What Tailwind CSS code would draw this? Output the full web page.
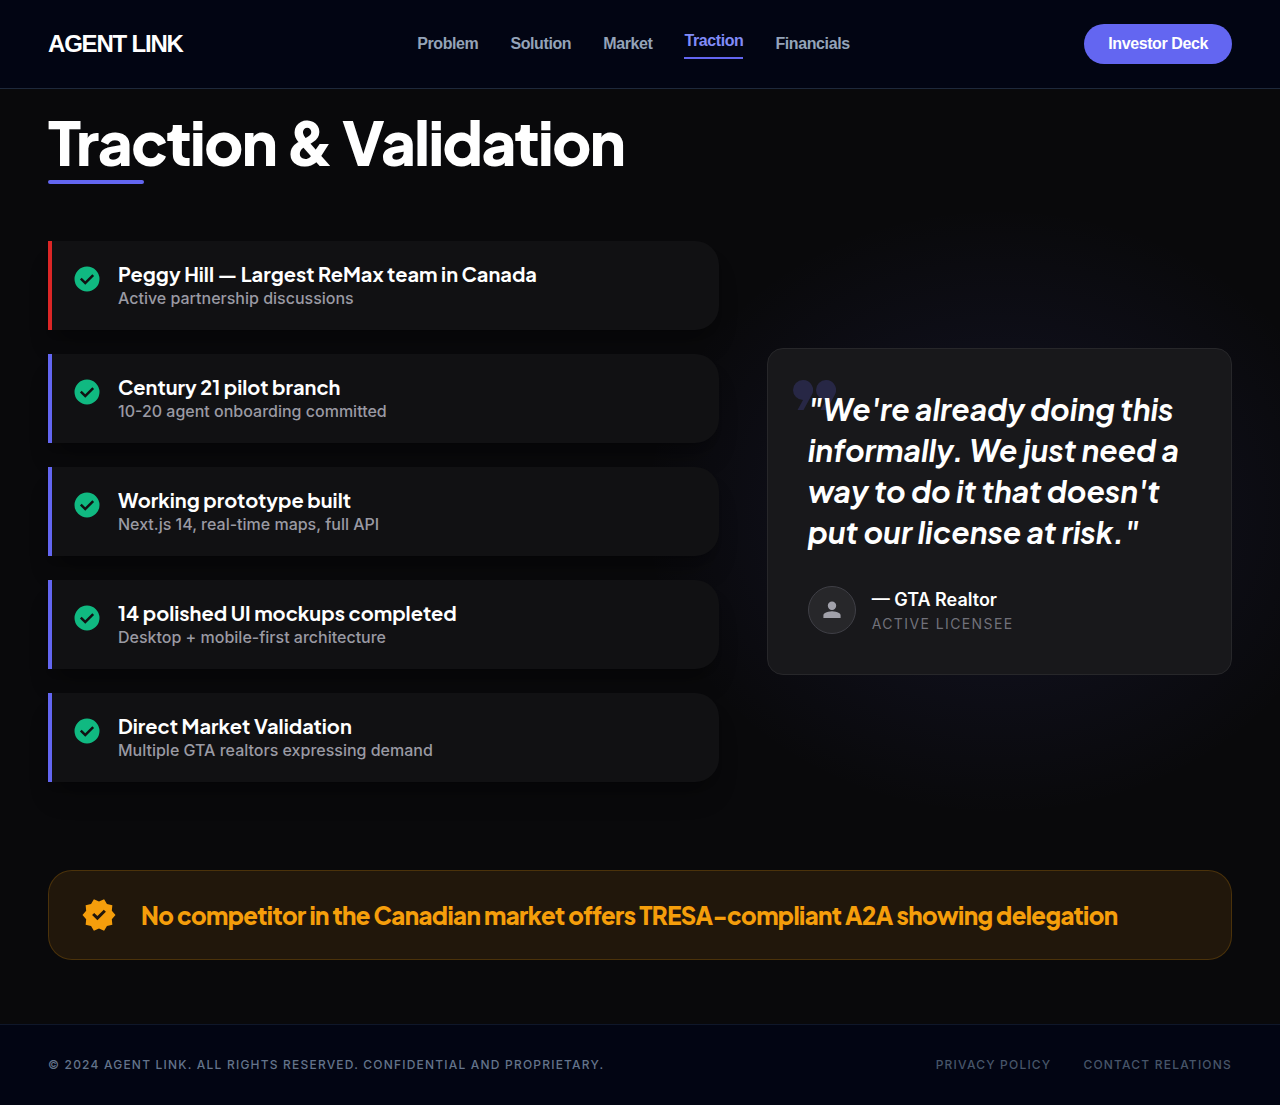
<!DOCTYPE html>
<html lang="en">
<head>
  <meta charset="UTF-8" />
  <meta name="viewport" content="width=device-width, initial-scale=1.0" />
  <title>Agent Link - Traction &amp; Validation</title>
  <script src="https://cdn.jsdelivr.net/npm/@tailwindcss/browser@4"></script>
</head>
<body class="min-h-screen flex flex-col bg-[#09090b] text-white font-['Inter',sans-serif] antialiased overflow-x-hidden">
  <!-- icon sprite -->
  <svg class="hidden">
    <symbol id="icon-check" viewBox="0 0 24 24">
      <path d="M12 2a10 10 0 1 0 0 20 10 10 0 0 0 0-20Zm-1.4 14.6-4.25-4.25 1.4-1.4 2.85 2.85 5.65-5.65 1.4 1.4-7.05 7.05Z" />
    </symbol>
  </svg>

  <header class="relative z-10 border-b border-[#1e293b] bg-[#020513] font-['Liberation_Sans',sans-serif] font-bold tracking-tight">
    <div class="flex items-center justify-between px-12 py-6">
      <a href="#" class="text-2xl leading-8 tracking-tighter">AGENT LINK</a>
      <nav class="flex items-center gap-8 text-base text-[#94a3b8]">
        <a href="#">Problem</a>
        <a href="#">Solution</a>
        <a href="#">Market</a>
        <a href="#" class="border-b-2 border-[#6366f1] pb-1 text-[#818cf8]">Traction</a>
        <a href="#">Financials</a>
      </nav>
      <button type="button" class="h-10 rounded-full bg-[#6366f1] px-6 text-base">Investor Deck</button>
    </div>
  </header>

  <main class="relative flex-1 px-12 pt-[23px] pb-16">
    <div class="mb-[57px]">
      <h1 class="font-['Plus_Jakarta_Sans','Inter',sans-serif] text-6xl leading-[60px] font-extrabold tracking-tight">Traction &amp; Validation</h1>
      <div class="mt-2 h-1 w-24 rounded-full bg-[#6366f1]"></div>
    </div>

    <div class="grid grid-cols-12 items-center gap-12">
      <ul class="relative z-10 col-span-7 space-y-6">
        <li class="flex items-start gap-4 rounded-r-3xl border-l-4 border-[#dc2626] bg-[#111113] p-5 shadow-xl shadow-black/20">
          <svg class="mt-[3px] size-[30px] shrink-0 fill-[#10b981]"><use href="#icon-check" /></svg>
          <div>
            <h3 class="font-['Plus_Jakarta_Sans','Inter',sans-serif] text-xl leading-[25px] font-bold">Peggy Hill — Largest ReMax team in Canada</h3>
            <p class="font-medium leading-6 text-[#9a9aa3]">Active partnership discussions</p>
          </div>
        </li>
        <li class="flex items-start gap-4 rounded-r-3xl border-l-4 border-[#6366f1] bg-[#111113] p-5 shadow-xl shadow-black/20">
          <svg class="mt-[3px] size-[30px] shrink-0 fill-[#10b981]"><use href="#icon-check" /></svg>
          <div>
            <h3 class="font-['Plus_Jakarta_Sans','Inter',sans-serif] text-xl leading-[25px] font-bold">Century 21 pilot branch</h3>
            <p class="font-medium leading-6 text-[#9a9aa3]">10-20 agent onboarding committed</p>
          </div>
        </li>
        <li class="flex items-start gap-4 rounded-r-3xl border-l-4 border-[#6366f1] bg-[#111113] p-5 shadow-xl shadow-black/20">
          <svg class="mt-[3px] size-[30px] shrink-0 fill-[#10b981]"><use href="#icon-check" /></svg>
          <div>
            <h3 class="font-['Plus_Jakarta_Sans','Inter',sans-serif] text-xl leading-[25px] font-bold">Working prototype built</h3>
            <p class="font-medium leading-6 text-[#9a9aa3]">Next.js 14, real-time maps, full API</p>
          </div>
        </li>
        <li class="flex items-start gap-4 rounded-r-3xl border-l-4 border-[#6366f1] bg-[#111113] p-5 shadow-xl shadow-black/20">
          <svg class="mt-[3px] size-[30px] shrink-0 fill-[#10b981]"><use href="#icon-check" /></svg>
          <div>
            <h3 class="font-['Plus_Jakarta_Sans','Inter',sans-serif] text-xl leading-[25px] font-bold">14 polished UI mockups completed</h3>
            <p class="font-medium leading-6 text-[#9a9aa3]">Desktop + mobile-first architecture</p>
          </div>
        </li>
        <li class="flex items-start gap-4 rounded-r-3xl border-l-4 border-[#6366f1] bg-[#111113] p-5 shadow-xl shadow-black/20">
          <svg class="mt-[3px] size-[30px] shrink-0 fill-[#10b981]"><use href="#icon-check" /></svg>
          <div>
            <h3 class="font-['Plus_Jakarta_Sans','Inter',sans-serif] text-xl leading-[25px] font-bold">Direct Market Validation</h3>
            <p class="font-medium leading-6 text-[#9a9aa3]">Multiple GTA realtors expressing demand</p>
          </div>
        </li>
      </ul>

      <div class="relative col-span-5">
        <!-- glow behind the quote -->
        <div class="absolute -inset-x-32 -inset-y-36 bg-radial from-[#6366f1]/12 to-transparent to-70%"></div>
        <figure class="relative rounded-2xl border border-[#27272a] bg-[#18181b] p-10">
          <svg viewBox="0 0 43 31" class="absolute top-[31px] left-[25px] w-[43px] fill-[#6366f1]/20">
            <path d="M10 0a10 10 0 0 1 8.700 15L10.500 30H4.500l5.500-10A10 10 0 0 1 10 0Z" />
            <path d="M33 0a10 10 0 0 1 8.700 15L33.500 30h-6l5.500-10A10 10 0 0 1 33 0Z" />
          </svg>
          <blockquote class="relative mb-[33px] font-['Plus_Jakarta_Sans','Inter',sans-serif] text-3xl leading-[41px] font-bold italic">"We're already doing this informally. We just need a way to do it that doesn't put our license at risk."</blockquote>
          <figcaption class="flex items-center gap-4">
            <div class="flex size-12 items-center justify-center rounded-full border border-[#3f3f46] bg-[#27272a]">
              <svg viewBox="0 0 24 24" class="size-6 fill-[#a1a1aa]"><path d="M12 12a4.200 4.200 0 1 0 0-8.400 4.200 4.200 0 0 0 0 8.400Zm-8.600 8v-2.400c0-1.100.6-2 1.600-2.500C7 14 9.500 13.300 12 13.300s5 .7 7 1.800c1 .5 1.600 1.400 1.600 2.500V20H3.400Z" /></svg>
            </div>
            <div>
              <p class="text-lg leading-7 font-semibold">— GTA Realtor</p>
              <p class="text-sm leading-5 tracking-widest text-[#71717a]">ACTIVE LICENSEE</p>
            </div>
          </figcaption>
        </figure>
      </div>
    </div>

    <section class="relative mt-22 flex items-center gap-6 rounded-3xl border border-[#f59e0b]/20 bg-[#21170b] px-8 py-[26px]">
      <svg viewBox="0 0 24 24" class="size-9 shrink-0 fill-[#f59e0b]"><path d="m8.600 22.500-1.900-3.200-3.600-.8.350-3.700L1 12l2.450-2.800-.35-3.700 3.600-.8 1.900-3.200L12 2.950l3.400-1.450 1.900 3.200 3.600.8-.35 3.700L23 12l-2.450 2.800.35 3.700-3.600.8-1.900 3.200-3.400-1.450-3.400 1.450Zm2.350-6.950 5.650-5.650-1.400-1.450-4.250 4.250-2.150-2.100L7.400 12l3.550 3.550Z" /></svg>
      <p class="font-['Plus_Jakarta_Sans','Inter',sans-serif] text-2xl leading-9 font-extrabold tracking-tight text-[#f59e0b]">No competitor in the Canadian market offers TRESA-compliant A2A showing delegation</p>
    </section>
  </main>

  <footer class="relative flex items-center justify-between border-t border-[#0f172a] bg-[#020513] px-12 py-8 text-xs font-medium tracking-widest text-[#64748b]">
    <p>© 2024 AGENT LINK. ALL RIGHTS RESERVED. CONFIDENTIAL AND PROPRIETARY.</p>
    <div class="flex gap-8 text-[#475569]">
      <a href="#">PRIVACY POLICY</a>
      <a href="#">CONTACT RELATIONS</a>
    </div>
  </footer>
</body>
</html>
